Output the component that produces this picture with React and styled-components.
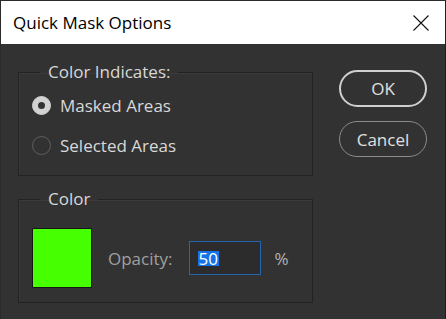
import styled, { createGlobalStyle } from 'styled-components'

const GlobalStyle = createGlobalStyle`
  html, body {
    margin: 0;
    padding: 0;
    background: #323232;
  }
  body {
    font-family: 'Open Sans', 'Noto Sans', sans-serif;
  }
`

const Window = styled.div`
  width: 446px;
  height: 319px;
  display: flex;
  flex-direction: column;
  box-sizing: border-box;
  border-top: 1px solid #2b2b2b;
  border-left: 1px solid #2b2b2b;
  border-right: 1px solid #1f1f1f;
  overflow: hidden;
`

const TitleBar = styled.div`
  height: 43px;
  flex: none;
  background: #ffffff;
  display: flex;
  align-items: center;
  justify-content: space-between;
  padding: 0 16px 0 12px;
`

const Title = styled.span`
  font-size: 17px;
  color: #000;
`

const CloseButton = styled.button`
  border: 0;
  background: none;
  padding: 0;
  width: 16px;
  height: 16px;
  display: flex;
  color: #000;
`

const Body = styled.div`
  flex: 1;
  background: #323232;
  display: grid;
  grid-template-columns: 295px 88px;
  column-gap: 26px;
  align-items: start;
  padding: 18px 0 0 17px;
`

const Column = styled.div`
  display: flex;
  flex-direction: column;
  gap: ${(p) => p.$gap || 0}px;
  margin-top: ${(p) => p.$top || 0}px;
`

const Group = styled.fieldset`
  margin: 0;
  padding: ${(p) => p.$pad};
  border: 1px solid #222222;
  box-shadow: inset 1px 1px 0 #3a3a3a;
  min-width: 0;
  display: flex;
  flex-direction: ${(p) => (p.$row ? 'row' : 'column')};
  align-items: ${(p) => (p.$row ? 'center' : 'stretch')};
`

const Legend = styled.legend`
  margin-left: 8px;
  padding: 0 8px;
  font-size: 17px;
  line-height: 20px;
  color: #d8d8d8;
`

const RadioRow = styled.label`
  display: flex;
  align-items: center;
  gap: 9px;
  height: 40px;
  font-size: 17px;
  color: #d8d8d8;
`

const RadioDot = styled.span`
  width: 19px;
  height: 19px;
  box-sizing: border-box;
  border-radius: 50%;
  flex: none;
  display: grid;
  place-items: center;
  background: ${(p) => (p.$checked ? '#d2d2d2' : 'transparent')};
  border: 1px solid ${(p) => (p.$checked ? '#d2d2d2' : '#5e5e5e')};

  &::after {
    content: '';
    width: 7px;
    height: 7px;
    border-radius: 50%;
    background: ${(p) => (p.$checked ? '#333333' : 'transparent')};
  }
`

const Swatch = styled.div`
  width: 60px;
  height: 60px;
  box-sizing: border-box;
  background: #46ff00;
  border: 1px solid #161616;
  flex: none;
`

const Label = styled.span`
  font-size: 17px;
  color: ${(p) => p.$color || '#a0a0a0'};
  margin-left: ${(p) => p.$ml || 0}px;
`

const Field = styled.div`
  width: 72px;
  height: 34px;
  box-sizing: border-box;
  margin-left: 16px;
  background: #2c2c2c;
  border: 1px solid #2565b0;
  display: flex;
  align-items: center;
  padding-left: 8px;
`

const Selected = styled.span`
  background: #1473e6;
  color: #fff;
  font-size: 17px;
  line-height: 15px;
  height: 15px;
  padding: 0 1px;
  display: inline-flex;
  align-items: center;
`

const PillButton = styled.button`
  height: ${(p) => p.$h}px;
  width: 88px;
  box-sizing: border-box;
  border-radius: 19px;
  background: transparent;
  border: ${(p) => (p.$primary ? '2px solid #cfcfcf' : '1px solid #8c8c8c')};
  color: #e0e0e0;
  font-family: inherit;
  font-size: 17px;
  padding: 0;
`

export default function App() {
  return (
    <>
      <GlobalStyle />
      <Window>
        <TitleBar>
          <Title>Quick Mask Options</Title>
          <CloseButton aria-label="Close">
            <svg width="16" height="16" viewBox="0 0 16 16">
              <path d="M0.5 0.5 L15.5 15.5 M15.5 0.5 L0.5 15.5" stroke="#111" strokeWidth="1.1" fill="none" />
            </svg>
          </CloseButton>
        </TitleBar>
        <Body>
          <Column $gap={13}>
            <Group $pad="3px 0 10px 13px">
              <Legend>Color Indicates:</Legend>
              <RadioRow>
                <RadioDot $checked />
                Masked Areas
              </RadioRow>
              <RadioRow>
                <RadioDot />
                Selected Areas
              </RadioRow>
            </Group>
            <Group $row $pad="19px 0 14px 13px">
              <Legend>Color</Legend>
              <Swatch />
              <Label $ml={16}>Opacity:</Label>
              <Field>
                <Selected>50</Selected>
              </Field>
              <Label $ml={14} $color="#b4b4b4">%</Label>
            </Group>
          </Column>
          <Column $gap={14} $top={8}>
            <PillButton $primary $h={37}>OK</PillButton>
            <PillButton $h={36}>Cancel</PillButton>
          </Column>
        </Body>
      </Window>
    </>
  )
}
